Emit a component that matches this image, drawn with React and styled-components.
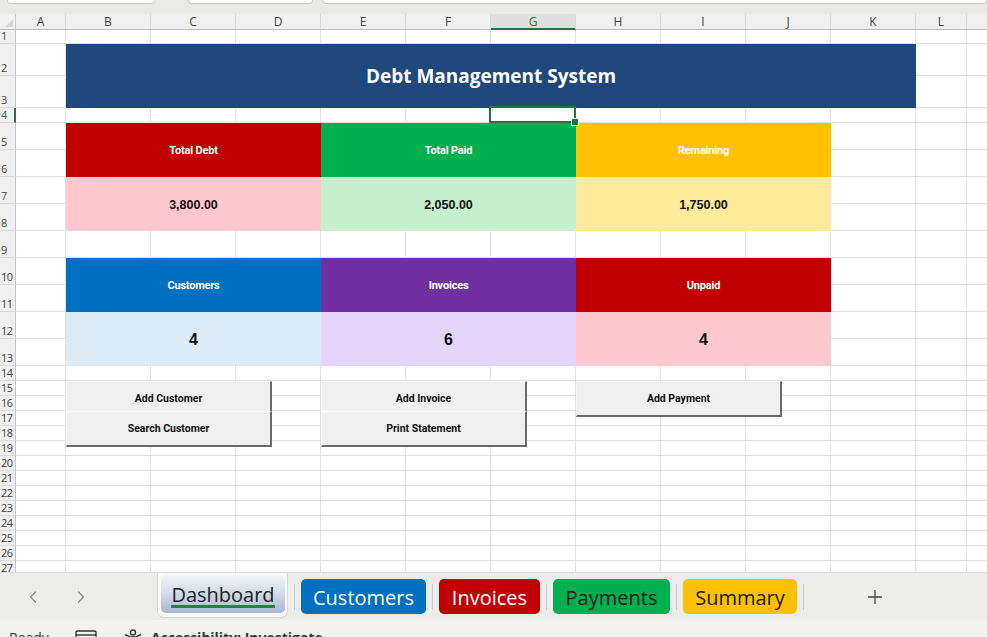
import React from "react";
import styled, { createGlobalStyle, css } from "styled-components";
import { ChevronLeft, ChevronRight, Plus } from "lucide-react";

const GlobalStyle = createGlobalStyle`
  html, body { margin: 0; padding: 0; overflow: hidden; background: #fff; }
  * { box-sizing: border-box; }
`;

// the last column (M) is only partly in view, its letter falls outside the window
const COLS = ["A", "B", "C", "D", "E", "F", "G", "H", "I", "J", "K", "L", ""];
// heights of rows 1..27
const ROW_HEIGHTS = [14, 32, 32, 15, 27, 27, 27, 27, 27, 27, 27, 27, 27, 15, 15, 15, 15, 15, 15, 15, 15, 15, 15, 15, 15, 15, 15];
const SELECTED = { r: 4, c: 7 };

const BLOCKS = [
  { r: 2, c: 2, w: 10, h: 2, bg: "#1f497d", kind: "title", text: "Debt Management System" },
  { r: 5, c: 2, w: 3, h: 2, bg: "#c00000", kind: "label", text: "Total Debt" },
  { r: 5, c: 5, w: 3, h: 2, bg: "#00b050", kind: "label", text: "Total Paid" },
  { r: 5, c: 8, w: 3, h: 2, bg: "#ffc000", kind: "label", text: "Remaining" },
  { r: 7, c: 2, w: 3, h: 2, bg: "#ffc7ce", kind: "value", text: "3,800.00" },
  { r: 7, c: 5, w: 3, h: 2, bg: "#c6efce", kind: "value", text: "2,050.00" },
  { r: 7, c: 8, w: 3, h: 2, bg: "#ffeb9c", kind: "value", text: "1,750.00" },
  { r: 10, c: 2, w: 3, h: 2, bg: "#0070c0", kind: "label", text: "Customers" },
  { r: 10, c: 5, w: 3, h: 2, bg: "#7030a0", kind: "label", text: "Invoices" },
  { r: 10, c: 8, w: 3, h: 2, bg: "#c00000", kind: "label", text: "Unpaid" },
  { r: 12, c: 2, w: 3, h: 2, bg: "#ddebf7", kind: "count", text: "4" },
  { r: 12, c: 5, w: 3, h: 2, bg: "#e5d5fb", kind: "count", text: "6" },
  { r: 12, c: 8, w: 3, h: 2, bg: "#ffc7ce", kind: "count", text: "4" },
];

const BUTTON_GROUPS = [
  { left: 66, items: ["Add Customer", "Search Customer"] },
  { left: 321, items: ["Add Invoice", "Print Statement"] },
  { left: 576, items: ["Add Payment"] },
];

const SHEETS = [
  { name: "Customers", bg: "#0070c0", fg: "#fff", w: 125 },
  { name: "Invoices", bg: "#c00000", fg: "#fff", w: 101 },
  { name: "Payments", bg: "#00b050", fg: "#1a1a1a", w: 117 },
  { name: "Summary", bg: "#ffc000", fg: "#1a1a1a", w: 114 },
];

const Window = styled.div`
  width: 987px;
  height: 637px;
  display: flex;
  flex-direction: column;
  overflow: hidden;
  background: #fff;
`;

const TopStrip = styled.div`
  height: 14px;
  flex: none;
  display: flex;
  align-items: flex-start;
  padding-left: 7px;
  background: #e9e9e7;
`;

const TopBox = styled.div`
  height: 4px;
  flex: none;
  width: ${(p) => p.$w}px;
  margin-left: ${(p) => p.$gap || 0}px;
  background: #fff;
  border: 1px solid #c9c9c9;
  border-top: none;
  border-radius: 0 0 6px 6px;
`;

const Sheet = styled.div`
  position: relative;
  height: 558px;
  flex: none;
  overflow: hidden;
  display: grid;
  grid-template-columns: 16px 50px repeat(10, 85px) 51px 85px;
  grid-template-rows: 16px ${ROW_HEIGHTS.map((h) => `${h}px`).join(" ")};
`;

const Corner = styled.div`
  grid-row: 1;
  grid-column: 1;
  position: relative;
  background: #f0f0f0;
  border-right: 1px solid #c9c9c9;
  border-bottom: 1px solid #bdbdbd;
  &::after {
    content: "";
    position: absolute;
    right: 2px;
    bottom: 2px;
    border-left: 8px solid transparent;
    border-bottom: 8px solid #d6d6d6;
  }
`;

const ColHead = styled.div`
  grid-row: 1;
  display: flex;
  align-items: center;
  justify-content: center;
  background: #f0f0f0;
  border-right: 1px solid #d9d9d9;
  border-bottom: 1px solid #bdbdbd;
  font-family: "Open Sans", sans-serif;
  font-size: 12px;
  color: #444;
  ${(p) =>
    p.$active &&
    css`
      background: #dfdfdf;
      color: #217346;
      border-bottom: 2px solid #217346;
    `}
`;

const RowHead = styled.div`
  grid-column: 1;
  display: flex;
  align-items: flex-end;
  padding: 0 0 0 1px;
  background: #f0f0f0;
  border-right: 1px solid #c3c3c3;
  border-bottom: 1px solid #dadada;
  font-family: "Open Sans", sans-serif;
  font-size: 11px;
  line-height: 14px;
  color: #444;
  letter-spacing: -0.5px;
  ${(p) =>
    p.$active &&
    css`
      color: #217346;
      border-right: 2px solid #217346;
    `}
`;

const Cell = styled.div`
  position: relative;
  border-right: 1px solid #e1e1e1;
  border-bottom: 1px solid #e1e1e1;
  ${(p) =>
    p.$selected &&
    css`
      z-index: 2;
      &::after {
        content: "";
        position: absolute;
        inset: -2px -1px -1px -2px;
        border: 2px solid #217346;
      }
      &::before {
        content: "";
        position: absolute;
        right: -4px;
        bottom: -4px;
        width: 6px;
        height: 6px;
        background: #217346;
        border: 1px solid #fff;
        z-index: 3;
      }
    `}
`;

const textStyles = {
  title: css`
    font-family: "Open Sans", sans-serif;
    font-weight: 700;
    font-size: 19px;
    color: #fff;
  `,
  label: css`
    font-family: Roboto, sans-serif;
    font-weight: 700;
    font-size: 11px;
    letter-spacing: -0.2px;
    color: #fff;
  `,
  value: css`
    font-family: "Liberation Sans", Arial, sans-serif;
    font-weight: 700;
    font-size: 12.5px;
    color: #111;
    padding-top: 2px;
  `,
  count: css`
    font-family: "Liberation Sans", Arial, sans-serif;
    font-weight: 700;
    font-size: 16px;
    color: #111;
    padding-top: 2px;
  `,
};

const Block = styled.div`
  grid-row: ${(p) => p.$r + 1} / span ${(p) => p.$h};
  grid-column: ${(p) => p.$c + 1} / span ${(p) => p.$w};
  display: flex;
  align-items: center;
  justify-content: center;
  background: ${(p) => p.$bg};
  ${(p) => textStyles[p.$kind]}
`;

const ButtonGroup = styled.div`
  position: absolute;
  top: 367px;
  left: ${(p) => p.$left}px;
  display: flex;
  flex-direction: column;
  z-index: 4;
`;

const FormButton = styled.button`
  width: 206px;
  height: 36px;
  padding: 0;
  background: #f0f0f0;
  border: none;
  border-top: 1px solid #fff;
  border-left: 1px solid #f8f8f8;
  border-right: 2px solid #6b6b6b;
  border-bottom: 2px solid #6b6b6b;
  font-family: Roboto, sans-serif;
  font-weight: 700;
  font-size: 10.5px;
  color: #111;
  & + & { margin-top: -6px; }
`;

const TabBar = styled.div`
  height: 48px;
  flex: none;
  display: flex;
  align-items: center;
  background: #ededeb;
  border-top: 1px solid #dadada;
  font-family: "Open Sans", sans-serif;
`;

const Nav = styled.div`
  width: 157px;
  display: flex;
  align-items: center;
  gap: 28px;
  padding-left: 23px;
  color: #8a8a8a;
`;

const ActiveFrame = styled.div`
  align-self: flex-start;
  height: 45px;
  width: 131px;
  padding: 2px 2px 0 3px;
  background: #f9f9f7;
  border: 1px solid #d8d8d8;
  border-top: none;
  border-radius: 0 0 7px 7px;
`;

const ActiveTab = styled.div`
  height: 38px;
  display: flex;
  align-items: center;
  justify-content: center;
  border-radius: 5px;
  background: linear-gradient(#f1f4f9 0%, #d4dde9 45%, #a8b8cf 100%);
  font-size: 20px;
  color: #222;
  position: relative;
  &::after {
    content: "";
    position: absolute;
    left: 10px;
    right: 10px;
    bottom: 5px;
    height: 3px;
    background: #2b7d45;
  }
`;

const Sep = styled.div`
  width: 1px;
  height: 26px;
  margin: 0 6px;
  background: #cbcbcb;
`;

const SheetTab = styled.div`
  width: ${(p) => p.$w}px;
  height: 35px;
  display: flex;
  align-items: center;
  justify-content: center;
  border-radius: 5px;
  background: ${(p) => p.$bg};
  color: ${(p) => p.$fg};
  font-size: 20px;
  padding-top: 2px;
`;

const AddSheet = styled.div`
  margin-left: 54px;
  display: flex;
  color: #444;
`;

const StatusBar = styled.div`
  flex: 1;
  display: flex;
  align-items: flex-start;
  padding: 9px 0 0 9px;
  background: #f3f3f1;
  font-family: "Open Sans", sans-serif;
  font-size: 14px;
  color: #333;
  white-space: nowrap;
`;

const StatusItem = styled.span`
  display: flex;
  align-items: flex-start;
  gap: 8px;
  margin-right: ${(p) => p.$gap || 0}px;
  font-weight: ${(p) => (p.$bold ? 700 : 400)};
  line-height: 18px;
`;

function CellModeIcon() {
  return (
    <svg width="22" height="18" viewBox="0 0 22 18" fill="none" stroke="#333" strokeWidth="1.4">
      <rect x="1" y="2" width="20" height="15" rx="1.5" />
      <line x1="1" y1="6" x2="21" y2="6" />
      <circle cx="13" cy="12" r="3" />
    </svg>
  );
}

function AccessIcon() {
  return (
    <svg width="20" height="18" viewBox="0 0 20 18" fill="none" stroke="#333" strokeWidth="1.4">
      <circle cx="10" cy="3.5" r="2.5" />
      <path d="M2 5.5 L7 8 H13 L18 5.5 M10 8 V14" />
    </svg>
  );
}

function Grid() {
  const cells = [];
  const covered = new Set();
  BLOCKS.forEach((b) => {
    for (let r = b.r; r < b.r + b.h; r++)
      for (let c = b.c; c < b.c + b.w; c++) covered.add(`${r}-${c}`);
  });

  cells.push(<Corner key="corner" />);
  COLS.forEach((letter, i) =>
    cells.push(
      <ColHead key={`h${i}`} style={{ gridColumn: i + 2 }} $active={i + 1 === SELECTED.c}>
        {letter}
      </ColHead>
    )
  );

  ROW_HEIGHTS.forEach((_, ri) => {
    const r = ri + 1;
    cells.push(
      <RowHead key={`r${r}`} style={{ gridRow: r + 1 }} $active={r === SELECTED.r}>
        {r}
      </RowHead>
    );
    COLS.forEach((_, ci) => {
      const c = ci + 1;
      const block = BLOCKS.find((b) => b.r === r && b.c === c);
      if (block) {
        cells.push(
          <Block key={`b${r}-${c}`} $r={r} $c={c} $w={block.w} $h={block.h} $bg={block.bg} $kind={block.kind}>
            {block.text}
          </Block>
        );
      } else if (!covered.has(`${r}-${c}`)) {
        cells.push(
          <Cell
            key={`c${r}-${c}`}
            style={{ gridRow: r + 1, gridColumn: c + 1 }}
            $selected={r === SELECTED.r && c === SELECTED.c}
          />
        );
      }
    });
  });

  return (
    <Sheet>
      {cells}
      {BUTTON_GROUPS.map((g) => (
        <ButtonGroup key={g.left} $left={g.left}>
          {g.items.map((label) => (
            <FormButton key={label}>{label}</FormButton>
          ))}
        </ButtonGroup>
      ))}
    </Sheet>
  );
}

export default function App() {
  return (
    <>
      <GlobalStyle />
      <Window>
        <TopStrip>
          <TopBox $w={148} />
          <TopBox $w={125} $gap={33} />
          <TopBox $w={665} $gap={9} />
        </TopStrip>
        <Grid />
        <TabBar>
          <Nav>
            <ChevronLeft size={20} strokeWidth={1.5} />
            <ChevronRight size={20} strokeWidth={1.5} />
          </Nav>
          <ActiveFrame>
            <ActiveTab>Dashboard</ActiveTab>
          </ActiveFrame>
          {SHEETS.map((s) => (
            <React.Fragment key={s.name}>
              <Sep />
              <SheetTab $w={s.w} $bg={s.bg} $fg={s.fg}>
                {s.name}
              </SheetTab>
            </React.Fragment>
          ))}
          <Sep />
          <AddSheet>
            <Plus size={22} strokeWidth={1.4} />
          </AddSheet>
        </TabBar>
        <StatusBar>
          <StatusItem $gap={26}>Ready</StatusItem>
          <StatusItem $gap={26}>
            <CellModeIcon />
          </StatusItem>
          <StatusItem $bold>
            <AccessIcon />
            Accessibility: Investigate
          </StatusItem>
        </StatusBar>
      </Window>
    </>
  );
}
